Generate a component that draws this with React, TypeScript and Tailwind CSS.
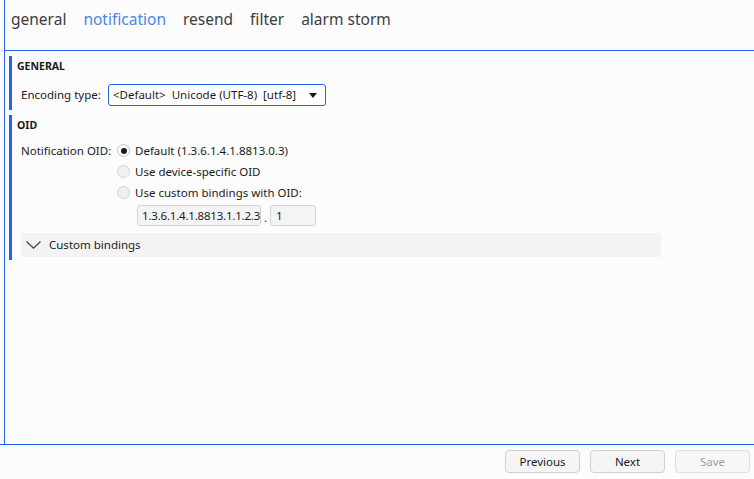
import React from "react";

const font = { fontFamily: '"Noto Sans", "Open Sans", sans-serif' };

function Radio({ checked, label }: { checked?: boolean; label: string }) {
  return (
    <div className="flex h-[21px] items-center">
      {checked ? (
        <span className="flex h-[13px] w-[13px] items-center justify-center rounded-full border border-[#c4c4c4] bg-white">
          <span className="h-[6px] w-[6px] rounded-full bg-[#1b1b1b]" />
        </span>
      ) : (
        <span className="h-[13px] w-[13px] rounded-full border border-[#d2d2d2] bg-[#f0f0f0]" />
      )}
      <span className="ml-[5px] text-[11.5px] text-[#1b1b1b]">{label}</span>
    </div>
  );
}

function Section({ title, children }: { title: string; children: React.ReactNode }) {
  return (
    <div className="border-l-[3px] border-[#2563eb] pl-[5px] pb-[3px]">
      <div className="flex h-[22px] items-center text-[10.5px] font-bold text-[#1b1b1b]">{title}</div>
      {children}
    </div>
  );
}

export default function App() {
  const tabs = ["general", "notification", "resend", "filter", "alarm storm"];
  return (
    <div className="flex h-[479px] w-[754px] flex-col bg-[#fcfcfc]" style={font}>
      <div className="ml-[4px] flex h-[444px] flex-col border-l border-[#2563eb]">
        <div className="flex h-[51px] items-start gap-[17px] border-b border-[#2563eb] pl-[6px] pt-[6px]">
          {tabs.map((t) => (
            <span
              key={t}
              className={`text-[15.5px] leading-[26px] ${t === "notification" ? "text-[#4a86e8]" : "text-[#3c3c3c]"}`}
            >
              {t}
            </span>
          ))}
        </div>

        <div className="flex flex-col gap-[5px] pl-[4px] pt-[5px]">
          <Section title="GENERAL">
            <div className="mt-[6px] flex h-[22px] items-center pl-[4px]">
              <span className="w-[87px] text-[11.5px] text-[#1b1b1b]">Encoding type:</span>
              <div className="flex h-[22px] w-[218px] items-center justify-between rounded-[3px] border border-[#2563eb] bg-white pl-[4px] pr-[8px]">
                <span className="whitespace-pre text-[11.5px] text-[#1b1b1b]">{"<Default>  Unicode (UTF-8)  [utf-8]"}</span>
                <svg width="8" height="5" viewBox="0 0 8 5">
                  <path d="M0 0h8L4 5z" fill="#1b1b1b" />
                </svg>
              </div>
            </div>
            <div className="h-[1px]" />
          </Section>

          <Section title="OID">
            <div className="mt-[3px] flex pl-[4px]">
              <span className="flex h-[21px] w-[96px] items-center text-[11.5px] text-[#1b1b1b]">Notification OID:</span>
              <div className="flex flex-col">
                <Radio checked label="Default (1.3.6.1.4.1.8813.0.3)" />
                <Radio label="Use device-specific OID" />
                <Radio label="Use custom bindings with OID:" />
                <div className="mt-[2px] flex items-end pl-[20px]">
                  <div className="flex h-[21px] w-[124px] items-center overflow-hidden whitespace-nowrap rounded-[3px] border border-[#d4d4d4] bg-[#f4f4f4] pl-[4px] text-[11.5px] tracking-[-0.2px] text-[#1b1b1b]">
                    1.3.6.1.4.1.8813.1.1.2.3
                  </div>
                  <span className="mx-[3px] text-[11.5px] leading-[16px] text-[#1b1b1b]">.</span>
                  <div className="flex h-[21px] w-[46px] items-center rounded-[3px] border border-[#d4d4d4] bg-[#f4f4f4] pl-[5px] text-[11.5px] text-[#1b1b1b]">
                    1
                  </div>
                </div>
              </div>
            </div>
            <div className="ml-[4px] mt-[7px] flex h-[24px] w-[640px] items-center bg-[#f3f3f3] pl-[5px]">
              <svg width="15" height="8" viewBox="0 0 15 8">
                <path d="M0.5 0.5L7.5 7.2L14.5 0.5" fill="none" stroke="#3a3a3a" strokeWidth="1.1" />
              </svg>
              <span className="ml-[8px] text-[11.5px] text-[#1b1b1b]">Custom bindings</span>
            </div>
          </Section>
        </div>
      </div>
      <div className="h-px w-full bg-[#2563eb]" />
      <div className="flex flex-1 items-start justify-end gap-[10px] pr-[4px] pt-[5px]">
        <button className="h-[23px] w-[75px] rounded-[4px] border border-[#d0d0d0] bg-[#f5f5f5] text-[11.5px] text-[#1b1b1b]">
          Previous
        </button>
        <button className="h-[23px] w-[75px] rounded-[4px] border border-[#d0d0d0] bg-[#f5f5f5] text-[11.5px] text-[#1b1b1b]">
          Next
        </button>
        <button className="h-[23px] w-[75px] rounded-[4px] border border-[#dedede] bg-[#f7f7f7] text-[11.5px] text-[#a0a0a0]">
          Save
        </button>
      </div>
    </div>
  );
}
